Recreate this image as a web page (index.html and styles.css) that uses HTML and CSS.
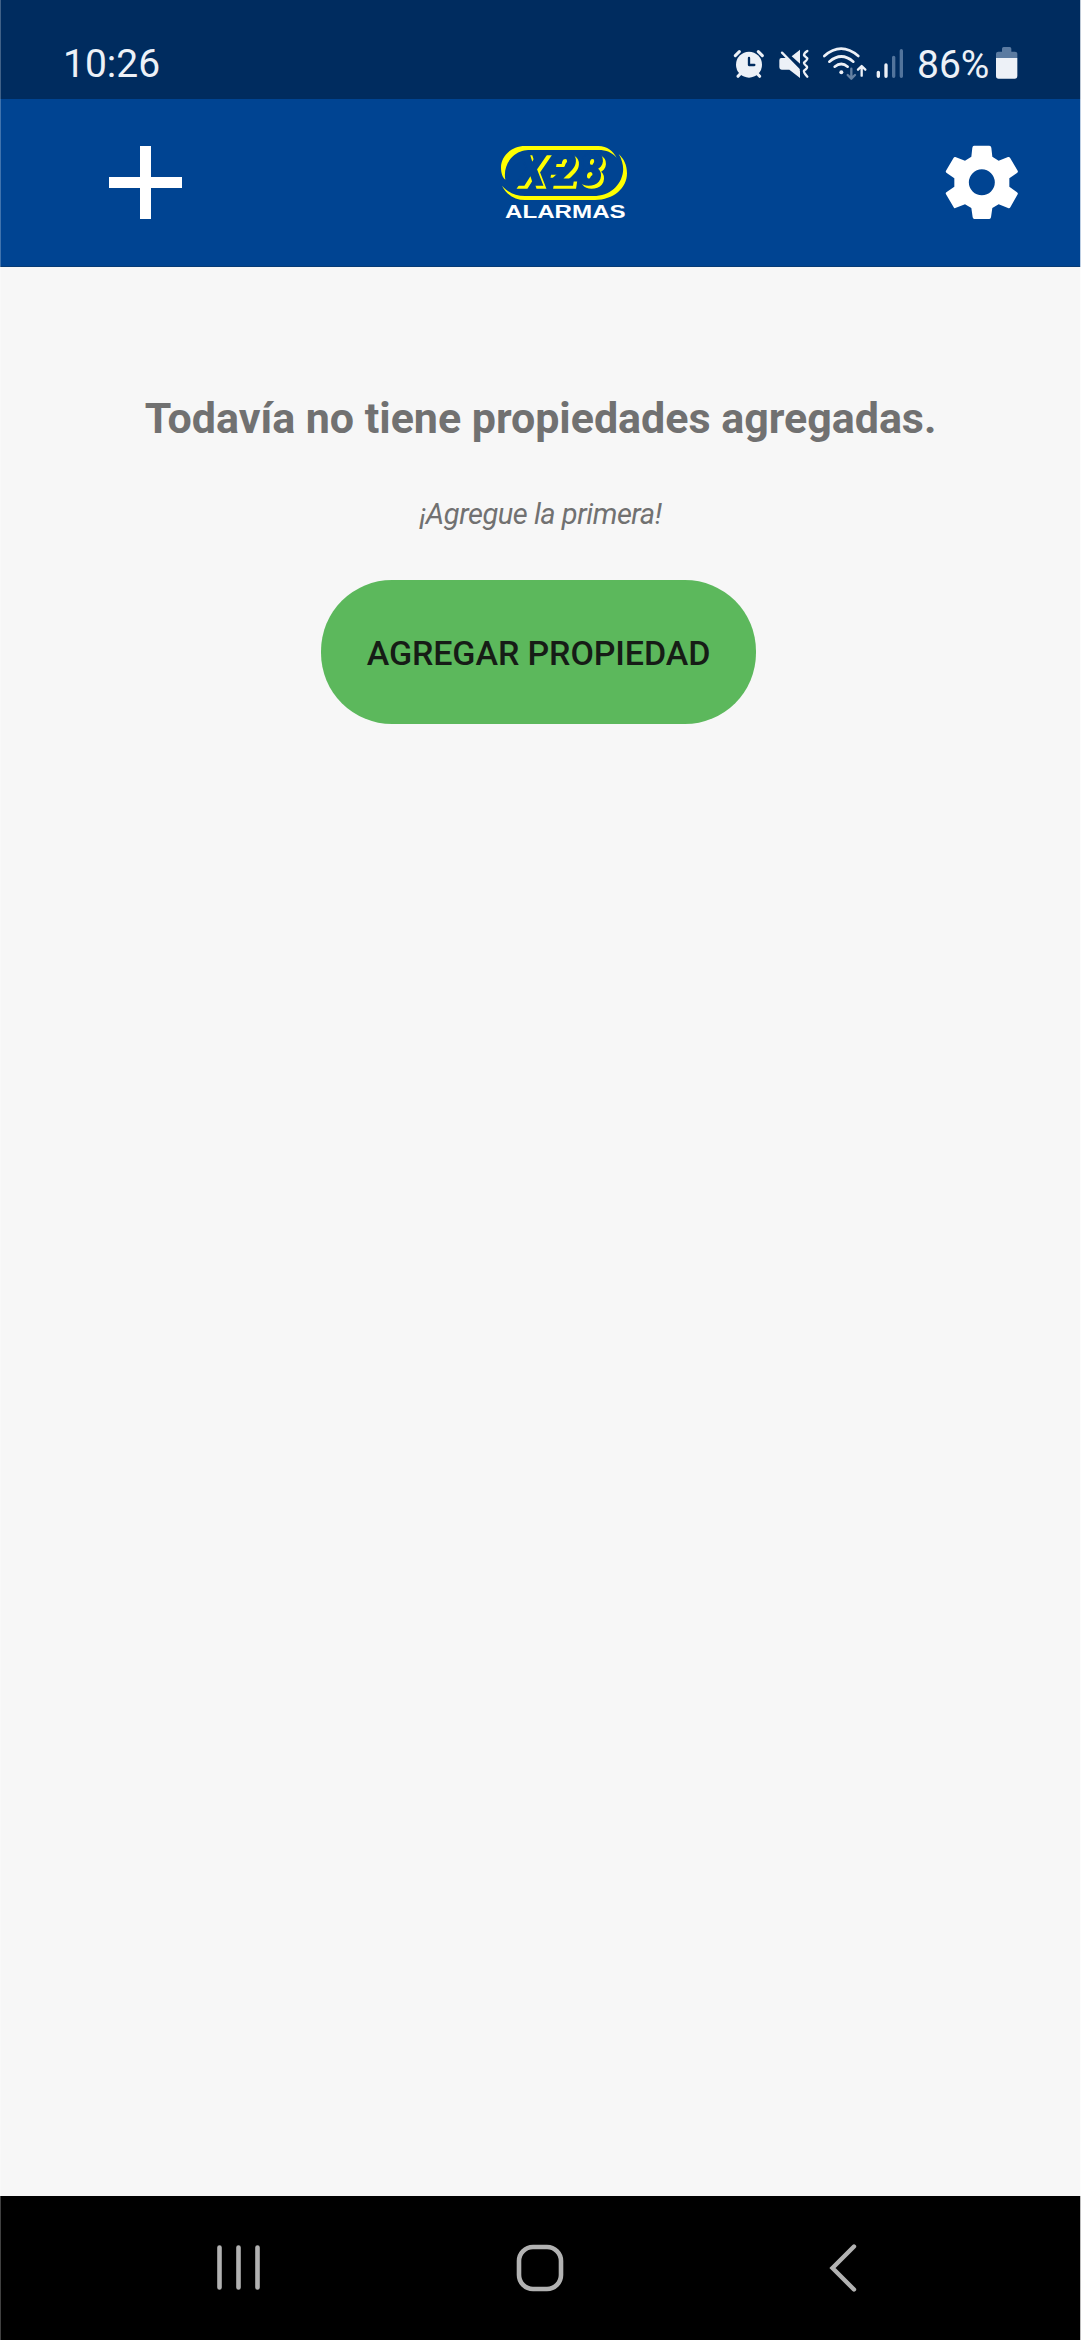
FILE: index.html
```html
<!DOCTYPE html>
<html lang="es">
<head>
<meta charset="utf-8">
<title>X-28 Alarmas</title>
<link rel="stylesheet" href="styles.css">
</head>
<body>
<div class="screen">
  <div class="status">
    <span class="time">10:26</span>
    <div class="indicators">
      <svg class="alarm" viewBox="36 0 99 210">
        <circle cx="87" cy="104" r="39" fill="#edf1f7"/>
        <path d="M46 77L58 65M127 77L115 65M54 139L61 131M119 139L112 131" stroke="#edf1f7" stroke-width="9" stroke-linecap="round"/>
        <path d="M87 84V105H103" fill="none" stroke="#002c5f" stroke-width="7" stroke-linecap="round" stroke-linejoin="round"/>
      </svg>
      <svg class="mute" viewBox="171 0 105 210">
        <path d="M184 84H200L240 122V144L208 119H185Q178 119 178 112V91Q178 84 184 84ZM215 79L240 59V101Z" fill="#edf1f7"/>
        <path d="M186 68L236 119" stroke="#edf1f7" stroke-width="7" stroke-linecap="round"/>
        <path d="M262 63Q251 70 252 76L262 85Q263 88 252 98Q251 101 261 110Q263 114 252 122Q250 127 262 140" fill="none" stroke="#edf1f7" stroke-width="7" stroke-linecap="round" stroke-linejoin="round"/>
      </svg>
      <svg class="wifi" viewBox="303 0 141 210" fill="none" stroke-linecap="round" stroke-linejoin="round">
        <path d="M313 78Q363 34 415 78M328 95Q364 64 400 95M344 110Q364 94 383 110" stroke="#edf1f7" stroke-width="8"/>
        <circle cx="364" cy="127" r="6" fill="#edf1f7"/>
        <path d="M394 116V145M383 135L394 146L405 135" stroke="#6480a2" stroke-width="7"/>
        <path d="M425 137V109M414 119L425 108L436 119" stroke="#edf1f7" stroke-width="7"/>
      </svg>
      <svg class="signal" viewBox="45 0 90 210" stroke-width="10" stroke-linecap="round">
        <path d="M55 127V139M78 105V139" stroke="#edf1f7"/>
        <path d="M101 82V139M124 62V139" stroke="#52749c"/>
      </svg>
      <span class="percent">86%</span>
      <svg class="battery" viewBox="405 0 72 210">
        <path d="M408 84V71Q408 65 415 65H426V56Q426 51 431 51H449Q454 51 454 56V65H465Q472 65 472 71V84Z" fill="#5b7ba1"/>
        <path d="M408 84H472V138Q472 146 464 146H416Q408 146 408 138Z" fill="#edf1f7"/>
      </svg>
    </div>
  </div>

  <header class="toolbar">
    <svg class="plus" viewBox="0 0 73 73"><path d="M31 0H42V31H73V42H42V73H31V42H0V31H31Z" fill="#fff"/></svg>
    <svg class="logo" viewBox="0 0 450 285">
      <path d="M380 68C370 50 352 33 325 33H105C62 33 33 65 33 97C33 115 38 128 46 134C41 108 50 79 73 60C88 48 105 45 120 45H325C350 45 365 52 380 68Z" fill="#ff0"/>
      <path d="M36 152C50 180 75 195 105 195H315C370 195 411 160 411 115C411 90 402 72 386 57C397 75 401 95 399 110C394 150 360 183 310 183H105C75 183 55 172 36 152Z" fill="#ff0"/>
      <text class="mark" y="149" x="82 167 184 264">X-28</text>
      <text class="brand" x="45" y="249" textLength="362" lengthAdjust="spacingAndGlyphs">ALARMAS</text>
    </svg>
    <svg class="gear" viewBox="45 45 222 225">
      <path d="M132 47H178Q183 47 184 53L187 80L206 92L234 81Q238 80 240 83L263 122Q265 125 262 128L238 145V170L261 187Q265 190 263 193L241 232Q239 236 234 234L206 223L187 234L183 262Q182 267 178 267H133Q129 267 128 262L124 234L105 223L76 234Q73 236 71 232L48 193Q46 190 49 187L73 170V145L49 128Q46 125 48 122L71 83Q73 80 76 81L105 92L124 80L127 53Q128 47 132 47ZM155.500 118A39 39 0 1 0 155.500 196A39 39 0 1 0 155.500 118Z" fill="#fff" fill-rule="evenodd"/>
    </svg>
  </header>

  <main class="content">
    <h1 class="title">Todavía no tiene propiedades agregadas.</h1>
    <p class="hint">¡Agregue la primera!</p>
    <button class="add">AGREGAR PROPIEDAD</button>
  </main>

  <nav class="navbar">
    <svg class="recents" viewBox="0 0 44 48"><path d="M2.500 3.500V43.500M21.500 3.500V43.500M40.500 3.500V43.500" stroke="#b2b2b2" stroke-width="4.600" stroke-linecap="round"/></svg>
    <svg class="home" viewBox="0 0 48 48"><rect x="3" y="3" width="42" height="42" rx="14" fill="none" stroke="#b2b2b2" stroke-width="4.600"/></svg>
    <svg class="back" viewBox="0 0 28 48"><path d="M25 2.500L3.500 24L25 45.500" fill="none" stroke="#b2b2b2" stroke-width="4.400" stroke-linecap="round"/></svg>
  </nav>
</div>
</body>
</html>
```
FILE: styles.css
```css
body {
  margin: 0;
  background: #f7f7f7;
  font-family: Roboto, sans-serif;
}

.screen {
  position: relative;
  display: flex;
  flex-direction: column;
  width: 1081px;
  height: 2340px;
  overflow: hidden;
}

.screen::before,
.screen::after {
  content: "";
  position: absolute;
  top: 0;
  width: 1px;
  height: 100%;
  z-index: 1;
}

.screen::before {
  left: 0;
  background: rgba(255, 255, 255, 0.25);
}

.screen::after {
  right: 0;
  background: rgba(255, 255, 255, 0.75);
}

svg {
  display: block;
  flex: none;
}

.status {
  display: flex;
  justify-content: space-between;
  box-sizing: border-box;
  height: 99px;
  padding: 30px 62px 0 63px;
  background: #002c5f;
  color: #edf1f7;
}

.time {
  font-size: 39px;
  line-height: 69px;
}

.indicators {
  display: flex;
  height: 70px;
}

.alarm { width: 33px; height: 70px; margin-right: 12px; }
.mute { width: 35px; height: 70px; margin-right: 9px; }
.wifi { width: 47px; height: 70px; margin-right: 7px; }
.signal { width: 30px; height: 70px; }
.battery { width: 24px; height: 70px; }

.percent {
  width: 78px;
  margin-left: 12px;
  font-size: 39px;
  line-height: 71px;
}

.toolbar {
  display: flex;
  justify-content: space-between;
  align-items: flex-start;
  box-sizing: border-box;
  height: 168px;
  padding: 36px 62px 0 109px;
  background: #004492;
  border-bottom: 1px solid #073b75;
}

.plus { width: 73px; height: 73px; margin-top: 11px; }
.logo { width: 150px; height: 95px; margin-left: 3px; }
.gear { width: 74px; height: 75px; margin-top: 10px; }

.mark {
  font: italic 900 132px Roboto, sans-serif;
  fill: #004492;
  stroke: #004492;
  stroke-width: 5px;
  filter: drop-shadow(9px 9px 0 #ff0);
}

.brand {
  font: bold 54px "Liberation Sans", sans-serif;
  fill: #fff;
}

.content {
  display: flex;
  flex: 1;
  flex-direction: column;
  align-items: center;
  color: #717171;
}

.title {
  margin: 125px 0 0;
  font-size: 43px;
  font-weight: 700;
  letter-spacing: -0.03px;
  line-height: 52px;
  white-space: nowrap;
}

.hint {
  margin: 52px 0 0;
  font-size: 29px;
  font-style: italic;
  letter-spacing: -0.45px;
  line-height: 36px;
}

.add {
  width: 435px;
  height: 144px;
  margin: 48px 4px 0 0;
  padding: 2px 0 0;
  border: 0;
  border-radius: 71px;
  background: #5cb85c;
  color: #161c16;
  font: 500 34px Roboto, sans-serif;
  letter-spacing: -0.1px;
}

.navbar {
  display: flex;
  align-items: center;
  box-sizing: border-box;
  height: 144px;
  padding-left: 217px;
  background: #000;
}

.recents { width: 44px; height: 48px; }
.home { width: 48px; height: 48px; margin-left: 255px; }
.back { width: 28px; height: 48px; margin-left: 265px; }
```
